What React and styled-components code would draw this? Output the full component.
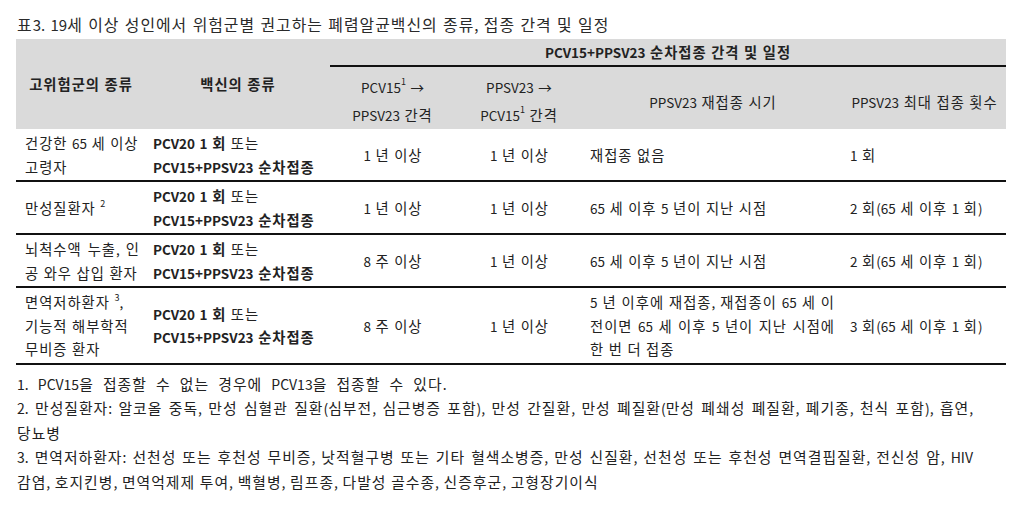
import React from "react";
import styled, { createGlobalStyle } from "styled-components";

const Global = createGlobalStyle`
  html, body { margin: 0; padding: 0; background: #fff; }
  body { font-family: "Noto Sans CJK KR", "Noto Sans", sans-serif; color: #222; }
`;

const Han = styled.span`
  font-size: 1.06em;
  letter-spacing: 1px;
`;

const HANGUL = /([\u1100-\u11FF\u3130-\u318F\uAC00-\uD7AF]+)/;

const K = ({ children }) =>
  String(children)
    .split(HANGUL)
    .map((p, i) => (i % 2 ? <Han key={i}>{p}</Han> : <React.Fragment key={i}>{p}</React.Fragment>));

const Page = styled.div`
  padding: 14px 18px 0 16px;
  width: 990px;
`;

const Title = styled.div`
  font-size: 15px;
  line-height: 22px;
  height: 22px;
  color: #2a2a2a;
  word-spacing: 2px;
  padding-left: 1px;
  margin-bottom: 3px;
  white-space: nowrap;
`;

const Table = styled.table`
  width: 990px;
  table-layout: fixed;
  border-collapse: collapse;
  font-size: 13.5px;
  word-spacing: 1.5px;
  color: #222;
`;

const HeadRow = styled.tr`
  background: #dadada;
`;

const Th = styled.th`
  font-weight: ${(p) => (p.$bold ? 700 : 400)};
  text-align: center;
  vertical-align: middle;
  padding: ${(p) => p.$pad || "0 4px"};
  height: ${(p) => p.$h || "auto"};
  --lh: ${(p) => p.$lh || "27px"};
  line-height: var(--lh);
  border-bottom: ${(p) => (p.$line ? "2px solid #111" : "none")};
  white-space: nowrap;
`;

const BodyRow = styled.tr`
  border-bottom: 2px solid #111;
`;

const Td = styled.td`
  vertical-align: middle;
  text-align: ${(p) => (p.$center ? "center" : "left")};
  padding: 2px ${(p) => p.$pr || "6px"} 2px ${(p) => p.$pl || "7px"};
  --lh: 23.5px;
  line-height: var(--lh);
  font-weight: 400;
`;

const Line = styled.div`
  height: var(--lh);
  overflow: visible;
  white-space: ${(p) => (p.$justify ? "normal" : "nowrap")};
  text-align: ${(p) => (p.$justify ? "justify" : "inherit")};
  text-align-last: ${(p) => (p.$justify ? "justify" : "auto")};
  word-spacing: ${(p) => p.$ws || "inherit"};
`;

const B = styled.b`
  font-weight: 700;
`;

const Sup = styled.sup`
  font-size: 9px;
  line-height: 0;
  vertical-align: ${(p) => p.$v || "7px"};
`;

const Notes = styled.div`
  width: 956px;
  font-size: 14px;
  --lh: 24.5px;
  line-height: var(--lh);
  word-spacing: 6px;
  color: #222;
  padding-top: 7px;
  padding-left: 1px;
`;

const Vaccine = () => (
  <>
    <Line>
      <B>
        <K>PCV20 1 회</K>
      </B>{" "}
      <K>또는</K>
    </Line>
    <Line>
      <B>
        <K>PCV15+PPSV23 순차접종</K>
      </B>
    </Line>
  </>
);

const rows = [
  {
    group: [{ t: "건강한 65 세 이상" }, { t: "고령자" }],
    a: "1 년 이상",
    b: "1 년 이상",
    when: [{ t: "재접종 없음" }],
    max: "1 회",
  },
  {
    group: [{ t: "만성질환자 ", sup: "2" }],
    a: "1 년 이상",
    b: "1 년 이상",
    when: [{ t: "65 세 이후 5 년이 지난 시점" }],
    max: "2 회(65 세 이후 1 회)",
  },
  {
    group: [{ t: "뇌척수액 누출, 인", j: true }, { t: "공 와우 삽입 환자" }],
    a: "8 주 이상",
    b: "1 년 이상",
    when: [{ t: "65 세 이후 5 년이 지난 시점" }],
    max: "2 회(65 세 이후 1 회)",
  },
  {
    group: [{ t: "면역저하환자 ", sup: "3", after: "," }, { t: "기능적 해부학적" }, { t: "무비증 환자" }],
    a: "8 주 이상",
    b: "1 년 이상",
    when: [
      { t: "5 년 이후에 재접종, 재접종이 65 세 이", j: true },
      { t: "전이면 65 세 이후 5 년이 지난 시점에", j: true },
      { t: "한 번 더 접종" },
    ],
    max: "3 회(65 세 이후 1 회)",
  },
];

const Lines = ({ items }) =>
  items.map((l, i) => (
    <Line key={i} $justify={l.j} $ws={l.j ? "0px" : undefined}>
      <K>{l.t}</K>
      {l.sup && <Sup>{l.sup}</Sup>}
      {l.after}
    </Line>
  ));

const notes = [
  [{ t: "1. PCV15을 접종할 수 없는 경우에 PCV13을 접종할 수 있다." }],
  [
    {
      t: "2. 만성질환자: 알코올 중독, 만성 심혈관 질환(심부전, 심근병증 포함), 만성 간질환, 만성 폐질환(만성 폐쇄성 폐질환, 폐기종, 천식 포함), 흡연,",
      j: true,
    },
    { t: "당뇨병" },
  ],
  [
    {
      t: "3. 면역저하환자: 선천성 또는 후천성 무비증, 낫적혈구병 또는 기타 혈색소병증, 만성 신질환, 선천성 또는 후천성 면역결핍질환, 전신성 암, HIV",
      j: true,
    },
    { t: "감염, 호지킨병, 면역억제제 투여, 백혈병, 림프종, 다발성 골수종, 신증후군, 고형장기이식", ws: "1.5px" },
  ],
];

export default function App() {
  return (
    <>
      <Global />
      <Page>
        <Title>
          <K>표3. 19세 이상 성인에서 위험군별 권고하는 폐렴알균백신의 종류, 접종 간격 및 일정</K>
        </Title>
        <Table>
          <colgroup>
            <col style={{ width: 130 }} />
            <col style={{ width: 184 }} />
            <col style={{ width: 125 }} />
            <col style={{ width: 128 }} />
            <col style={{ width: 260 }} />
            <col style={{ width: 163 }} />
          </colgroup>
          <thead>
            <HeadRow>
              <Th $bold rowSpan={2}>
                <K>고위험군의 종류</K>
              </Th>
              <Th $bold rowSpan={2}>
                <K>백신의 종류</K>
              </Th>
              <Th $bold colSpan={4} $line $h="26px" $lh="26px" $pad="0">
                <K>PCV15+PPSV23 순차접종 간격 및 일정</K>
              </Th>
            </HeadRow>
            <HeadRow>
              <Th $h="51px" $pad="7px 4px 0">
                PCV15<Sup $v="8px">1</Sup> →
                <br />
                <K>PPSV23 간격</K>
              </Th>
              <Th $pad="7px 4px 0">
                PPSV23 →
                <br />
                PCV15<Sup $v="8px">1</Sup> <K>간격</K>
              </Th>
              <Th $pad="7px 4px 0">
                <K>PPSV23 재접종 시기</K>
              </Th>
              <Th $pad="7px 4px 0">
                <K>PPSV23 최대 접종 횟수</K>
              </Th>
            </HeadRow>
          </thead>
          <tbody>
            {rows.map((r, i) => (
              <BodyRow key={i}>
                <Td $pl="9px" $pr="6px">
                  <Lines items={r.group} />
                </Td>
                <Td>
                  <Vaccine />
                </Td>
                <Td $center>
                  <Line>
                    <K>{r.a}</K>
                  </Line>
                </Td>
                <Td $center>
                  <Line>
                    <K>{r.b}</K>
                  </Line>
                </Td>
                <Td $pr="8px">
                  <Lines items={r.when} />
                </Td>
                <Td>
                  <Line>
                    <K>{r.max}</K>
                  </Line>
                </Td>
              </BodyRow>
            ))}
          </tbody>
        </Table>
        <Notes>
          {notes.map((lines, i) => (
            <div key={i}>
              {lines.map((l, j) => (
                <Line key={j} $justify={l.j} $ws={l.j ? "1px" : l.ws}>
                  <K>{l.t}</K>
                </Line>
              ))}
            </div>
          ))}
        </Notes>
      </Page>
    </>
  );
}
